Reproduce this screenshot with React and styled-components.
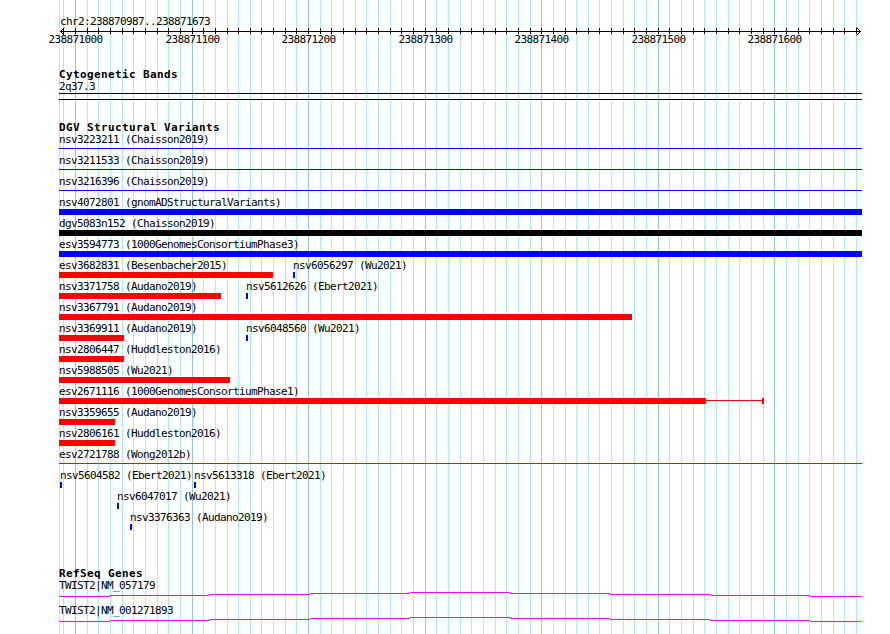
import React from "react";
import styled, { createGlobalStyle } from "styled-components";

const BP0 = 238871000;
const PX_PER_BP = 1.1655;
const X_AT_BP0 = 75;
const xOf = (bp) => X_AT_BP0 + (bp - BP0) * PX_PER_BP;
const colOf = (bp) => Math.round(xOf(bp));

const MONO = `"DejaVu Sans Mono", "Liberation Mono", monospace`;
const BLUE = "#0000ff";
const RED = "#ff0000";
const BLACK = "#000000";

const GlobalStyle = createGlobalStyle`
  html, body { margin: 0; padding: 0; background: #ffffff; }
  #root { width: 890px; height: 634px; }
`;

const Page = styled.div`
  position: relative;
  width: 890px;
  height: 634px;
  overflow: hidden;
  background: #ffffff;
  color: #000;
  font-family: ${MONO};
  font-size: 11px;
  letter-spacing: -0.62px;
`;

const GridLayer = styled.svg`
  position: absolute;
  top: 0;
  left: 0;
  width: 890px;
  height: 634px;
  z-index: 0;
`;

const Content = styled.div`
  position: relative;
  z-index: 1;
  display: flex;
  flex-direction: column;
`;

const RulerSvg = styled.svg`
  display: block;
  width: 890px;
  height: 48px;
  font-family: ${MONO};
  font-size: 11px;
  letter-spacing: -0.62px;
`;

const Track = styled.section`
  display: flex;
  flex-direction: column;
  margin-top: ${(p) => p.$gap}px;
`;

const TrackTitle = styled.h2`
  margin: 0;
  padding: 1px 0 0 59px;
  height: 11px;
  font: bold 11px/12px ${MONO};
  letter-spacing: 0.38px;
  white-space: nowrap;
`;

const BandLabel = styled.div`
  padding: 1px 0 0 59px;
  height: 11px;
  line-height: 12px;
`;

const BandBox = styled.div`
  margin: 1px 0 0 59px;
  width: 803px;
  height: 5px;
  border-top: 1px solid #000;
  border-bottom: 1px solid #000;
`;

const Rows = styled.div`
  display: flex;
  flex-direction: column;
`;

const Row = styled.div`
  position: relative;
  height: 21px;
`;

const Feature = styled.div`
  position: absolute;
  top: 0;
  display: flex;
  flex-direction: column;
  align-items: flex-start;
`;

const FeatureLabel = styled.span`
  display: block;
  padding-top: 1px;
  height: 11px;
  line-height: 12px;
  white-space: nowrap;
`;

const Glyph = styled.div`
  display: flex;
  align-items: flex-start;
  height: 6px;
  margin-top: 1px;
`;

const Block = styled.div`
  flex: none;
  height: ${(p) => (p.$thin ? 1 : 6)}px;
  margin-top: ${(p) => (p.$thin ? 2 : 0)}px;
  background: ${(p) => p.$color};
`;

const GeneRow = styled.div`
  display: flex;
  flex-direction: column;
  height: 25px;
`;

const GeneLabel = styled.span`
  display: block;
  padding: 1px 0 0 59px;
  height: 11px;
  line-height: 12px;
  white-space: nowrap;
`;

const GeneSvg = styled.svg`
  display: block;
  width: 890px;
  height: 13px;
`;

const FULL = { x: 59, end: 862 };

const dgvRows = [
  [{ ...FULL, label: "nsv3223211 (Chaisson2019)", color: BLUE, thin: true }],
  [{ ...FULL, label: "nsv3211533 (Chaisson2019)", color: BLUE, thin: true }],
  [{ ...FULL, label: "nsv3216396 (Chaisson2019)", color: BLUE, thin: true }],
  [{ ...FULL, label: "nsv4072801 (gnomADStructuralVariants)", color: BLUE }],
  [{ ...FULL, label: "dgv5083n152 (Chaisson2019)", color: BLACK }],
  [{ ...FULL, label: "esv3594773 (1000GenomesConsortiumPhase3)", color: BLUE }],
  [
    { x: 59, end: 273, label: "esv3682831 (Besenbacher2015)", color: RED },
    { x: 293, end: 295, label: "nsv6056297 (Wu2021)", color: BLUE },
  ],
  [
    { x: 59, end: 221, label: "nsv3371758 (Audano2019)", color: RED },
    { x: 246, end: 248, label: "nsv5612626 (Ebert2021)", color: BLUE },
  ],
  [{ x: 59, end: 632, label: "nsv3367791 (Audano2019)", color: RED }],
  [
    { x: 59, end: 124, label: "nsv3369911 (Audano2019)", color: RED },
    { x: 246, end: 248, label: "nsv6048560 (Wu2021)", color: BLUE },
  ],
  [{ x: 59, end: 124, label: "nsv2806447 (Huddleston2016)", color: RED }],
  [{ x: 59, end: 230, label: "nsv5988505 (Wu2021)", color: RED }],
  [
    {
      x: 59,
      end: 706,
      label: "esv2671116 (1000GenomesConsortiumPhase1)",
      color: RED,
      tail: { end: 762, cap: 2 },
    },
  ],
  [{ x: 59, end: 115, label: "nsv3359655 (Audano2019)", color: RED }],
  [{ x: 59, end: 115, label: "nsv2806161 (Huddleston2016)", color: RED }],
  [{ ...FULL, label: "esv2721788 (Wong2012b)", color: RED, thin: true }],
  [
    { x: 60, end: 62, label: "nsv5604582 (Ebert2021)", color: BLUE },
    { x: 194, end: 196, label: "nsv5613318 (Ebert2021)", color: BLUE },
  ],
  [{ x: 117, end: 119, label: "nsv6047017 (Wu2021)", color: BLUE }],
  [{ x: 130, end: 132, label: "nsv3376363 (Audano2019)", color: BLUE }],
];

const genes = ["TWIST2|NM_057179", "TWIST2|NM_001271893"];
const hatXs = [59, 110, 210, 310, 410, 510, 610, 710, 810, 861];
const hatDy = [4, 3, 2, 1, 0, 1, 2, 3, 4];

const tickBps = [];
for (let bp = 238870990; bp <= 238871670; bp += 10) tickBps.push(bp);
const majorBps = tickBps.filter((bp) => bp % 100 === 0);

function Grid() {
  return (
    <GridLayer viewBox="0 0 890 634" shapeRendering="crispEdges">
      <rect x="59" y="0" width="1" height="634" fill="#a8ecf0" />
      {tickBps.map((bp) => (
        <rect
          key={bp}
          x={colOf(bp)}
          y="0"
          width="1"
          height="634"
          fill={bp % 100 === 0 ? "#8cc8e8" : "#a8ecf0"}
        />
      ))}
    </GridLayer>
  );
}

function Ruler() {
  return (
    <RulerSvg viewBox="0 0 890 48">
      <text x="60" y="25" fill="#000">
        chr2:238870987..238871673
      </text>
      <g shapeRendering="crispEdges" fill="#000">
        <rect x="60" y="31" width="801" height="1" />
        {tickBps.map((bp) => (
          <rect key={bp} x={colOf(bp)} y="28" width="1" height="6" />
        ))}
      </g>
      <path d="M64.5 27.5 L60.5 31.5 L64.5 35.5" fill="none" stroke="#000" strokeWidth="1" />
      <path d="M856.5 27.5 L860.5 31.5 L856.5 35.5" fill="none" stroke="#000" strokeWidth="1" />
      {majorBps.map((bp) => (
        <text key={bp} x={colOf(bp) + 0.5} y="43" textAnchor="middle" fill="#000">
          {bp}
        </text>
      ))}
    </RulerSvg>
  );
}

function DgvFeature({ f }) {
  return (
    <Feature style={{ left: f.x }}>
      <FeatureLabel>{f.label}</FeatureLabel>
      <Glyph>
        <Block $color={f.color} $thin={f.thin} style={{ width: f.end - f.x }} />
        {f.tail && (
          <>
            <Block $color={f.color} $thin style={{ width: f.tail.end - f.end }} />
            <Block $color={f.color} style={{ width: f.tail.cap }} />
          </>
        )}
      </Glyph>
    </Feature>
  );
}

function GeneHat() {
  return (
    <GeneSvg viewBox="0 0 890 13" shapeRendering="crispEdges">
      {hatDy.map((dy, i) => (
        <rect
          key={i}
          x={hatXs[i]}
          y={1 + dy}
          width={hatXs[i + 1] - hatXs[i]}
          height="1"
          fill="#ff00ff"
        />
      ))}
    </GeneSvg>
  );
}

export default function App() {
  return (
    <>
      <GlobalStyle />
      <Page>
        <Grid />
        <Content>
          <Ruler />
          <Track $gap={20}>
            <TrackTitle>Cytogenetic Bands</TrackTitle>
            <BandLabel>2q37.3</BandLabel>
            <BandBox />
          </Track>
          <Track $gap={21}>
            <TrackTitle>DGV Structural Variants</TrackTitle>
            <Rows>
              {dgvRows.map((row, i) => (
                <Row key={i}>
                  {row.map((f) => (
                    <DgvFeature key={f.label} f={f} />
                  ))}
                </Row>
              ))}
            </Rows>
          </Track>
          <Track $gap={35}>
            <TrackTitle>RefSeq Genes</TrackTitle>
            {genes.map((g) => (
              <GeneRow key={g}>
                <GeneLabel>{g}</GeneLabel>
                <GeneHat />
              </GeneRow>
            ))}
          </Track>
        </Content>
      </Page>
    </>
  );
}
